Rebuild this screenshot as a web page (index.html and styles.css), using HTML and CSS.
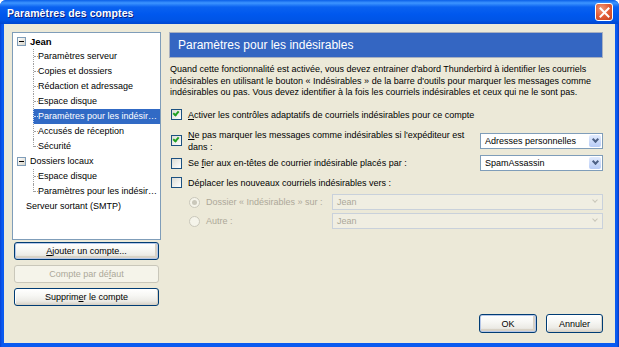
FILE: index.html
```html
<!DOCTYPE html>
<html>
<head>
    <title>Paramètres des comptes</title>
    <link rel="stylesheet" href="styles.css">
</head>
<body>
    <div class="window">
        <div class="titlebar">
            <span class="title">Paramètres des comptes</span>
            <span class="close">
                <svg width="11" height="11" viewBox="0 0 11 11">
                    <path d="M1.5 1.5 L9.5 9.5 M9.5 1.5 L1.5 9.5" stroke="#fff" stroke-width="2" stroke-linecap="square"/>
                </svg>
            </span>
        </div>
        <div class="client">
            <div class="sidebar">
                <div class="tree">
                    <div class="node"><span class="twisty"></span><b>Jean</b></div>
                    <ul class="children">
                        <li>Paramètres serveur</li>
                        <li>Copies et dossiers</li>
                        <li>Rédaction et adressage</li>
                        <li>Espace disque</li>
                        <li class="selected">Paramètres pour les indésir…</li>
                        <li>Accusés de réception</li>
                        <li>Sécurité</li>
                    </ul>
                    <div class="node"><span class="twisty"></span>Dossiers locaux</div>
                    <ul class="children">
                        <li>Espace disque</li>
                        <li>Paramètres pour les indésir…</li>
                    </ul>
                    <div class="node leaf">Serveur sortant (SMTP)</div>
                </div>
                <div class="side-buttons">
                    <button><u>A</u>jouter un compte...</button>
                    <button disabled>Compte par dé<u>f</u>aut</button>
                    <button>Supprim<u>e</u>r le compte</button>
                </div>
            </div>
            <div class="main">
                <div class="header">Paramètres pour les indésirables</div>
                <p class="desc">Quand cette fonctionnalité est activée, vous devez entrainer d'abord Thunderbird à identifier les courriels indésirables en utilisant le bouton « Indésirables » de la barre d'outils pour marquer les messages comme indésirables ou pas. Vous devez identifier à la fois les courriels indésirables et ceux qui ne le sont pas.</p>

                <div class="option opt-adaptive">
                    <span class="check checked"></span>
                    <span class="label"><u>A</u>ctiver les contrôles adaptatifs de courriels indésirables pour ce compte</span>
                </div>

                <div class="option opt-whitelist">
                    <span class="check checked"></span>
                    <span class="label wide">
                        <span class="line"><u>N</u>e pas marquer les messages comme indésirables si l'expéditeur est</span>
                        <span class="line">dans :</span>
                    </span>
                    <span class="select short">Adresses personnelles<span class="arrow"></span></span>
                </div>

                <div class="option opt-trust">
                    <span class="check"></span>
                    <span class="label wide">Se <u>f</u>ier aux en-têtes de courrier indésirable placés par :</span>
                    <span class="select short">SpamAssassin<span class="arrow"></span></span>
                </div>

                <div class="option opt-move">
                    <span class="check"></span>
                    <span class="label">Déplacer les nouveaux courriels indésirables vers :</span>
                </div>

                <div class="radio-row first">
                    <span class="radio on"></span>
                    <span class="radio-label">Dossier « Indésirables » sur :</span>
                    <span class="select long disabled">Jean<span class="arrow"></span></span>
                </div>
                <div class="radio-row">
                    <span class="radio"></span>
                    <span class="radio-label">Autre :</span>
                    <span class="select long disabled">Jean<span class="arrow"></span></span>
                </div>

                <div class="footer">
                    <button class="ok">OK</button>
                    <button class="cancel">Annuler</button>
                </div>
            </div>
        </div>
    </div>
</body>
</html>
```

FILE: styles.css
```css
html, body {
    margin: 0;
    padding: 0;
}
body {
    width: 619px;
    height: 347px;
    overflow: hidden;
    font-family: "Liberation Sans", Arial, sans-serif;
    font-size: 9px;
    color: #000;
}
ul {
    list-style: none;
    margin: 0;
    padding: 0;
}
u {
    text-decoration: underline;
    text-underline-offset: 1px;
}

/* window frame */
.window {
    width: 619px;
    height: 347px;
    display: flex;
    flex-direction: column;
    background: linear-gradient(to right, #0842d4 0, #0a5af0 2px, #0a5af0 617px, #0638c0 619px);
    border-radius: 6px 6px 0 0;
    overflow: hidden;
}
.titlebar {
    height: 24px;
    flex: none;
    display: flex;
    align-items: center;
    padding: 0 5px 0 7px;
    background: linear-gradient(to bottom, #0a5fe8 0, #3d95ff 3px, #0a62f0 7px, #0058ee 14px, #0055e6 20px, #0046d0 24px);
}
.title {
    flex: 1;
    color: #fff;
    font-weight: bold;
    font-size: 10.5px;
    letter-spacing: 0.1px;
    text-shadow: 1px 1px 0 #0a1f80;
    padding-top: 1px;
}
.close {
    width: 16px;
    height: 16px;
    display: flex;
    align-items: center;
    justify-content: center;
    border: 1px solid #fff;
    border-radius: 3px;
    background: radial-gradient(circle at 35% 30%, #f0997a 0, #e4603a 45%, #c4401f 100%);
    margin-right: 1px;
}

.client {
    flex: 1;
    display: flex;
    margin: 0 4px 4px 4px;
    padding: 8px 12px 10px 8px;
    gap: 8px;
    background: #ece9d8;
}

/* left side */
.sidebar {
    width: 151px;
    display: flex;
    flex-direction: column;
}
.tree {
    height: 205px;
    background: #fff;
    border: 1px solid #7f9db9;
    padding-top: 1px;
}
.node {
    height: 15px;
    line-height: 15px;
    display: flex;
    align-items: center;
    padding-left: 4px;
    white-space: nowrap;
}
.node b {
    font-size: 9.5px;
}
.twisty {
    width: 7px;
    height: 7px;
    border: 1px solid #7f9db9;
    background: linear-gradient(to bottom right, #fff, #d8d4c8);
    margin-right: 4px;
    position: relative;
}
.twisty::after {
    content: "";
    position: absolute;
    left: 1px;
    top: 3px;
    width: 5px;
    height: 1px;
    background: #000;
}
.node.leaf {
    padding-left: 13px;
}
.children {
    padding-left: 20px;
}
.children li {
    height: 15px;
    line-height: 15px;
    padding-left: 5px;
    position: relative;
    white-space: nowrap;
    overflow: hidden;
}
.children li::before {
    content: "";
    position: absolute;
    left: 0;
    top: 0;
    height: 15px;
    border-left: 1px dotted #a0a0a0;
}
.children li:last-child::before {
    height: 8px;
}
.children li::after {
    content: "";
    position: absolute;
    left: 1px;
    top: 7px;
    width: 4px;
    border-top: 1px dotted #a0a0a0;
}
.children li.selected {
    background: #316ac5;
    color: #fff;
}
.children li.selected::before,
.children li.selected::after {
    border-color: #c8d8f0;
}

.side-buttons {
    display: flex;
    flex-direction: column;
    gap: 5px;
    padding: 2px 2px 0;
}
.side-buttons button {
    height: 18px;
}

button {
    font-family: "Liberation Sans", Arial, sans-serif;
    font-size: 9px;
    height: 19px;
    padding: 0;
    border: 1px solid #003c74;
    border-radius: 3px;
    background: linear-gradient(to bottom, #ffffff 0, #f7f7f4 40%, #ecebe6 75%, #d6d0c5 100%);
    box-shadow: inset -1px -1px 0 #d8d2c6, inset 1px 1px 0 #fff;
    color: #000;
}
button:disabled {
    border-color: #c9c7ba;
    background: #f5f4ea;
    box-shadow: none;
    color: #aca899;
}
.side-buttons button:first-child {
    box-shadow: inset 0 0 0 1px #b6c7e8, inset -1px -1px 0 2px #d8d2c6;
}

/* right side */
.main {
    flex: 1;
    display: flex;
    flex-direction: column;
}
.header {
    height: 24px;
    line-height: 24px;
    background: #3466c2;
    border: 1px solid #a8b0c0;
    color: #fff;
    font-size: 12px;
    padding-left: 8px;
}
.desc {
    margin: 6px 0 0 1px;
    line-height: 11.5px;
    padding-right: 4px;
}

.option {
    display: flex;
    align-items: center;
    padding-left: 2px;
}
.opt-adaptive {
    height: 14px;
    margin-top: 9px;
}
.opt-whitelist {
    height: 24px;
    margin-top: 7px;
}
.opt-trust {
    height: 17px;
    margin-top: 2px;
}
.opt-move {
    height: 14px;
    margin-top: 4px;
}
.label {
    margin-left: 6px;
    line-height: 12px;
}
.label.wide {
    width: 280px;
    margin-right: auto;
}
.label .line {
    display: block;
    white-space: nowrap;
}

.check {
    width: 9px;
    height: 9px;
    border: 1px solid #1c5180;
    background: linear-gradient(to bottom right, #dcdcd4, #fff);
    flex: none;
    position: relative;
}
.check.checked::after {
    content: "";
    position: absolute;
    left: 2px;
    top: 0;
    width: 2px;
    height: 4px;
    border: solid #21a121;
    border-width: 0 2px 2px 0;
    transform: rotate(40deg);
}

.select {
    height: 14px;
    line-height: 14px;
    border: 1px solid #7f9db9;
    background: #fff;
    padding-left: 4px;
    position: relative;
    flex: none;
}
.select.short {
    width: 117px;
}
.select.long {
    width: 265px;
}
.arrow {
    position: absolute;
    right: 1px;
    top: 1px;
    width: 12px;
    height: 12px;
    border-radius: 2px;
    background: linear-gradient(to bottom, #e2ebfd, #b8ccf6);
}
.arrow::after {
    content: "";
    position: absolute;
    left: 4px;
    top: 2px;
    width: 3px;
    height: 3px;
    border: solid #4d6185;
    border-width: 0 2px 2px 0;
    transform: rotate(45deg);
}
.select.disabled {
    background: #f0eee2;
    border-color: #c9d1db;
    color: #aca899;
}
.select.disabled .arrow {
    background: #f0eee2;
}
.select.disabled .arrow::after {
    border-color: #c9c7ba;
    border-width: 0 1px 1px 0;
}

.radio-row {
    height: 17px;
    display: flex;
    align-items: center;
    padding-left: 20px;
    color: #aca899;
}
.radio-row.first {
    margin-top: 4px;
}
.radio-row + .radio-row {
    margin-top: 2px;
}
.radio {
    width: 9px;
    height: 9px;
    border: 1px solid #cac8bb;
    border-radius: 50%;
    background: #f5f4ea;
    position: relative;
    flex: none;
}
.radio.on::after {
    content: "";
    position: absolute;
    left: 2px;
    top: 2px;
    width: 5px;
    height: 5px;
    border-radius: 50%;
    background: #cac8bb;
}
.radio-label {
    margin-left: 6px;
    width: 126px;
}

.footer {
    margin-top: auto;
    display: flex;
    justify-content: flex-end;
    gap: 9px;
}
.footer .ok {
    width: 58px;
    box-shadow: inset 0 0 0 1px #b6c7e8, inset -1px -1px 0 2px #d8d2c6;
}
.footer .cancel {
    width: 57px;
}
```
